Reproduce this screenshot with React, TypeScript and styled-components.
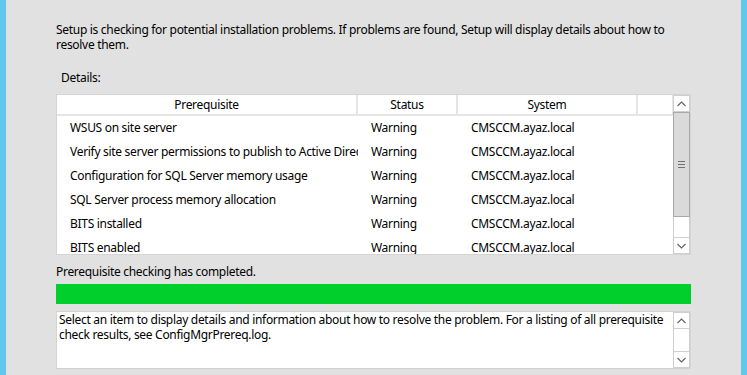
import React from "react";
import styled, { createGlobalStyle } from "styled-components";

interface PrereqRow {
    name: string;
    status: string;
    system: string;
}

const rows: PrereqRow[] = [
    { name: "WSUS on site server", status: "Warning", system: "CMSCCM.ayaz.local" },
    { name: "Verify site server permissions to publish to Active Directory.", status: "Warning", system: "CMSCCM.ayaz.local" },
    { name: "Configuration for SQL Server memory usage", status: "Warning", system: "CMSCCM.ayaz.local" },
    { name: "SQL Server process memory allocation", status: "Warning", system: "CMSCCM.ayaz.local" },
    { name: "BITS installed", status: "Warning", system: "CMSCCM.ayaz.local" },
    { name: "BITS enabled", status: "Warning", system: "CMSCCM.ayaz.local" },
];

const columns = [
    { title: "Prerequisite", width: 299 },
    { title: "Status", width: 98 },
    { title: "System", width: 178 },
    { title: "", width: 34 },
];

const Chevron: React.FC<{ up?: boolean }> = ({ up }) => (
    <svg width="9" height="6" viewBox="0 0 9 6">
        <path
            d={up ? "M0.5 5 L4.5 1 L8.5 5" : "M0.5 1 L4.5 5 L8.5 1"}
            fill="none"
            stroke="#606060"
            strokeWidth="1.1"
        />
    </svg>
);

const ScrollBar: React.FC<{ thumb?: boolean }> = ({ thumb }) => (
    <ScrollColumn>
        <ArrowButton><Chevron up /></ArrowButton>
        {thumb && (
            <Thumb>
                <Grip />
            </Thumb>
        )}
        <Track />
        <ArrowButton><Chevron /></ArrowButton>
    </ScrollColumn>
);

const App: React.FC = () => {
    return (
        <>
            <GlobalStyle />
            <Window>
                <EdgeBar />
                <Content>
                    <Intro>
                        Setup is checking for potential installation problems. If problems are found, Setup will display details about how to resolve them.
                    </Intro>
                    <DetailsLabel>Details:</DetailsLabel>
                    <ListView>
                        <ListArea>
                            <HeaderRow>
                                {columns.map((col, i) => (
                                    <HeaderCell key={i} $width={col.width}>{col.title}</HeaderCell>
                                ))}
                            </HeaderRow>
                            {rows.map((row, i) => (
                                <Row key={i}>
                                    <Cell $width={columns[0].width + 2}>{row.name}</Cell>
                                    <Cell $width={columns[1].width + 2}>{row.status}</Cell>
                                    <Cell $width={columns[2].width + 2}>{row.system}</Cell>
                                </Row>
                            ))}
                        </ListArea>
                        <ScrollBar thumb />
                    </ListView>
                    <StatusText>Prerequisite checking has completed.</StatusText>
                    <Progress />
                    <InfoBox>
                        <InfoText>
                            Select an item to display details and information about how to resolve the problem. For a listing of all prerequisite check results, see ConfigMgrPrereq.log.
                        </InfoText>
                        <ScrollBar />
                    </InfoBox>
                </Content>
                <EdgeBar />
            </Window>
        </>
    );
};

const GlobalStyle = createGlobalStyle`
    html, body {
        margin: 0;
        padding: 0;
        background: #e1e1e1;
    }
    body {
        font-family: "Noto Sans", "Open Sans", sans-serif;
        font-size: 12px;
        letter-spacing: -0.3px;
        color: #000;
    }
`;

const Window = styled.div`
    display: flex;
    width: 747px;
    height: 375px;
    overflow: hidden;
    background: #e1e1e1;
`;

const EdgeBar = styled.div`
    width: 6px;
    flex-shrink: 0;
    background: #62c7ec;
`;

const Content = styled.div`
    flex: 1;
    display: flex;
    flex-direction: column;
    padding: 22px 0 0 50px;
`;

const Intro = styled.p`
    margin: 0;
    width: 640px;
    line-height: 15px;
`;

const DetailsLabel = styled.div`
    margin: 18px 0 0 5px;
    line-height: 15px;
`;

const ListView = styled.div`
    display: flex;
    margin-top: 9px;
    width: 633px;
    height: 159px;
    border: 1px solid #d4d4d4;
    background: #fff;
`;

const ListArea = styled.div`
    flex: 1;
    overflow: hidden;
`;

const HeaderRow = styled.div`
    display: flex;
    height: 19px;
    border-bottom: 2px solid #e5e5e5;
`;

const HeaderCell = styled.div<{ $width: number }>`
    width: ${p => p.$width}px;
    flex-shrink: 0;
    border-right: 2px solid #e5e5e5;
    text-align: center;
    line-height: 19px;
    white-space: nowrap;
    overflow: hidden;
`;

const Row = styled.div`
    display: flex;
    height: 24px;
    align-items: center;
`;

const Cell = styled.div<{ $width: number }>`
    width: ${p => p.$width}px;
    flex-shrink: 0;
    box-sizing: border-box;
    padding-left: 13px;
    white-space: nowrap;
    overflow: hidden;
    line-height: 24px;
`;

const ScrollColumn = styled.div`
    width: 17px;
    flex-shrink: 0;
    display: flex;
    flex-direction: column;
    background: #fff;
`;

const ArrowButton = styled.div`
    height: 17px;
    box-sizing: border-box;
    border: 1px solid #cfcfcf;
    display: flex;
    align-items: center;
    justify-content: center;
    background: #fff;
`;

const Thumb = styled.div`
    height: 105px;
    box-sizing: border-box;
    border: 1px solid #a9a9a9;
    background: #dadada;
    display: flex;
    align-items: center;
    justify-content: center;
`;

const Grip = styled.div`
    width: 7px;
    height: 5px;
    border-top: 1px solid #707070;
    border-bottom: 1px solid #707070;
    position: relative;
    &::after {
        content: "";
        position: absolute;
        left: 0;
        right: 0;
        top: 2px;
        height: 1px;
        background: #707070;
    }
`;

const Track = styled.div`
    flex: 1;
    border-left: 1px solid #cfcfcf;
    border-right: 1px solid #cfcfcf;
`;

const StatusText = styled.div`
    margin-top: 9px;
    line-height: 15px;
`;

const Progress = styled.div`
    margin-top: 5px;
    width: 635px;
    height: 20px;
    background: #00cf2c;
`;

const InfoBox = styled.div`
    display: flex;
    margin-top: 7px;
    width: 633px;
    height: 56px;
    border: 1px solid #d4d4d4;
    background: #fff;
`;

const InfoText = styled.div`
    flex: 1;
    padding: 0 4px 0 2px;
    line-height: 15px;
`;

export default App;
